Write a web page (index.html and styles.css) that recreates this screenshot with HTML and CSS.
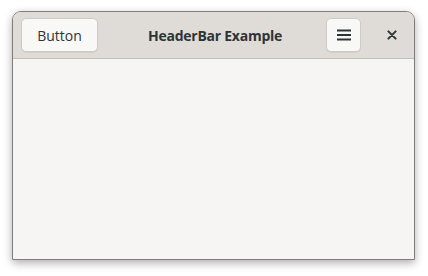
FILE: index.html
```html
<!DOCTYPE html>
<html lang="en">
<head>
	<title>HeaderBar Example</title>
	<meta charset="utf-8">
	<link rel="stylesheet" href="styles.css">
</head>
<body>

<!-- window -->
<div class="window">
	<div class="headerbar">
		<div class="hb-start">
			<button class="btn btn-text">Button</button>
		</div>
		<h1 class="hb-title">HeaderBar Example</h1>
		<div class="hb-end">
			<button class="btn btn-icon" aria-label="Menu">
				<svg width="16" height="16" viewBox="0 0 16 16">
					<rect x="1" y="2.5" width="14" height="2" fill="#2e3436"/>
					<rect x="1" y="7" width="14" height="2" fill="#2e3436"/>
					<rect x="1" y="11.5" width="14" height="2" fill="#2e3436"/>
				</svg>
			</button>
			<button class="btn-close" aria-label="Close">
				<svg width="10" height="10" viewBox="0 0 10 10">
					<path d="M1.4 1.4 L8.6 8.6 M8.6 1.4 L1.4 8.6" stroke="#2e3436" stroke-width="2" stroke-linecap="round"/>
				</svg>
			</button>
		</div>
	</div>
	<div class="content"></div>
</div>
<!-- //window -->

</body>
</html>
```

FILE: styles.css
```css
* {padding: 0; margin: 0; box-sizing: border-box;}
html {height: 100%;}
body {min-height: 276px; height: 100%; background: #fff; padding: 11px 0 0 12px; font-family: "Open Sans", "Noto Sans", sans-serif;}

.window {
    width: 403px;
    height: 249px;
    border: 1px solid #807e7c;
    border-radius: 9px 9px 0 0;
    background: #f6f5f4;
    box-shadow: 0 3px 9px rgba(0,0,0,0.32);
    display: flex;
    flex-direction: column;
    overflow: hidden;
}

.headerbar {
    display: grid;
    grid-template-columns: 1fr auto 1fr;
    align-items: center;
    height: 47px;
    padding: 0 5px 0 8px;
    background: #dfdcd8;
    border-bottom: 1px solid #c2bdb8;
}
.hb-start {display: flex;}
.hb-end {display: flex; justify-content: flex-end; align-items: center; gap: 14px;}
.hb-title {font-size: 14px; font-weight: bold; color: #2e3436; letter-spacing: -0.25px;}

.btn {
    height: 34px;
    background: #f8f8f7;
    border: 1px solid #cfcac5;
    border-radius: 5px;
    box-shadow: 0 1px 0 rgba(0,0,0,0.06);
    color: #2e3436;
    font-family: inherit;
    display: flex;
    align-items: center;
    justify-content: center;
}
.btn-text {width: 77px; font-size: 14px;}
.btn-icon {width: 35px;}

.btn-close {
    width: 34px;
    height: 34px;
    background: none;
    border: 0;
    display: flex;
    align-items: center;
    justify-content: center;
}

.content {flex: 1;}
```
